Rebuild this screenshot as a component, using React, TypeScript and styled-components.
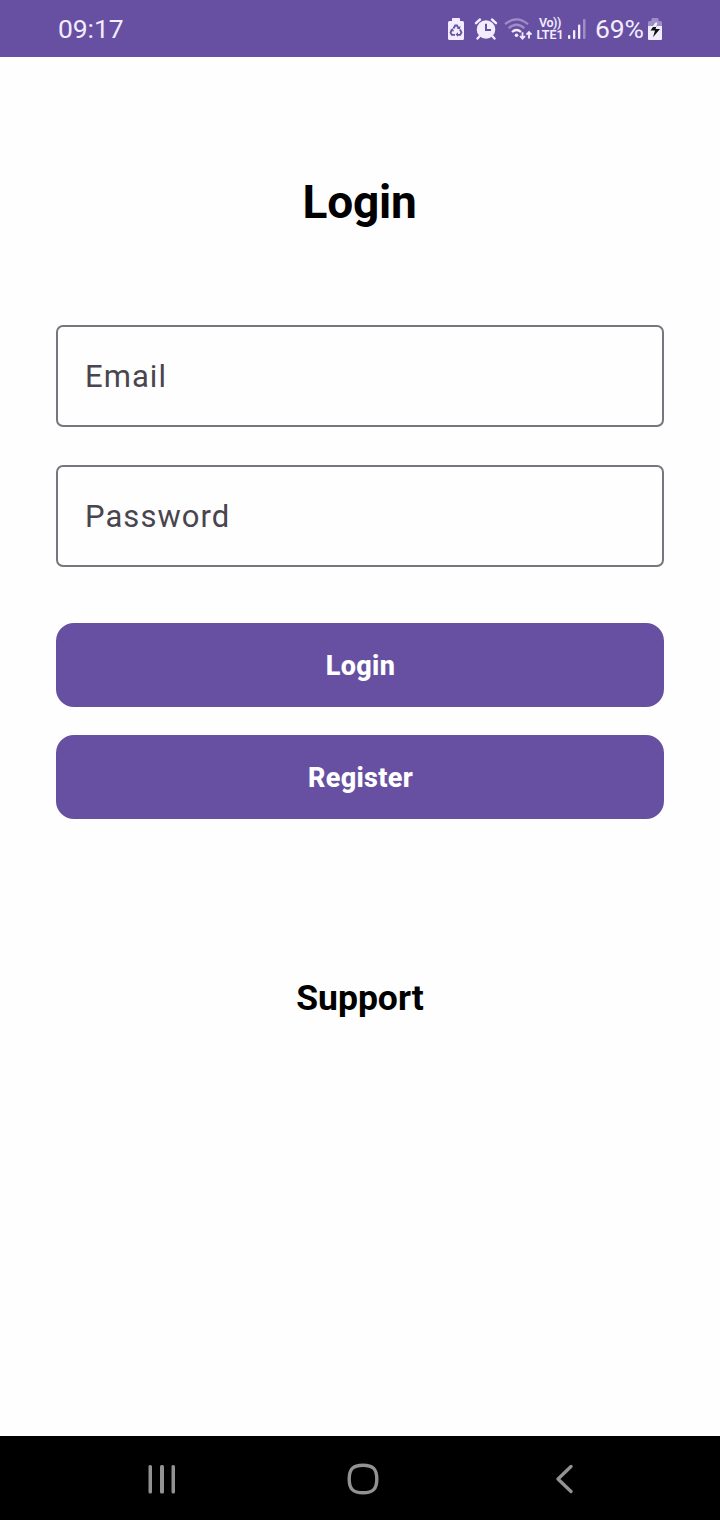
import React from "react";
import styled, { createGlobalStyle } from "styled-components";

const GlobalStyle = createGlobalStyle`
  * { box-sizing: border-box; }
  body { margin: 0; background: #fefefe; font-family: Roboto, "Liberation Sans", sans-serif; }
`;

const Screen = styled.div`
  display: flex;
  flex-direction: column;
  width: 720px;
  height: 1520px;
  background: #fefefe;
`;

const StatusBar = styled.header`
  display: flex;
  align-items: center;
  justify-content: space-between;
  height: 57px;
  padding: 1px 58px 0;
  background: #6750a2;
  color: #f3ecff;
`;

const Clock = styled.time`
  font-size: 26.5px;
  line-height: 32px;
  letter-spacing: -0.1px;
`;

const Indicators = styled.div`
  display: flex;
  align-items: center;
  height: 32px;
  svg { display: block; flex: none; }
`;

const Network = styled.div`
  display: flex;
  flex-direction: column;
  align-items: center;
  width: 28px;
  margin: 0 4px 0 3px;
  font-weight: 600;
  white-space: nowrap;
`;

const NetworkLine = styled.span<{ $size: number; $spacing?: number }>`
  font-size: ${(p) => p.$size}px;
  letter-spacing: ${(p) => p.$spacing ?? 0}px;
  line-height: 12px;
`;

const Percent = styled.span`
  width: 62px;
  padding-left: 9px;
  font-size: 26.5px;
  line-height: 32px;
  letter-spacing: -0.2px;
  white-space: nowrap;
`;

const Main = styled.main`
  flex: 1;
  display: flex;
  flex-direction: column;
  padding: 115px 56px 0;
`;

const Title = styled.h1`
  margin: 0;
  padding-right: 1px;
  height: 60px;
  font-size: 46px;
  line-height: 60px;
  font-weight: 700;
  letter-spacing: -0.2px;
  text-align: center;
  color: #000;
`;

const Form = styled.form`
  display: flex;
  flex-direction: column;
  margin-top: 93px;
`;

const Field = styled.input`
  width: 100%;
  height: 102px;
  margin: 0 0 38px;
  padding: 0 27px;
  border: 2px solid #79747e;
  border-radius: 7px;
  outline: none;
  background: transparent;
  font-family: inherit;
  font-size: 31px;
  letter-spacing: 1.05px;
  color: #49454f;
  &::placeholder { color: #49454f; opacity: 1; }
`;

const Actions = styled.div`
  display: flex;
  flex-direction: column;
  gap: 28px;
  margin-top: 18px;
`;

const Button = styled.button`
  height: 84px;
  padding: 2px 0 0 1px;
  border: 0;
  border-radius: 18px;
  background: #6750a2;
  color: #fff;
  font-family: inherit;
  font-size: 27px;
  font-weight: 800;
  letter-spacing: 0.3px;
`;

const Support = styled.a`
  margin-top: 156px;
  font-size: 35.5px;
  line-height: 46px;
  font-weight: 700;
  text-align: center;
  color: #000;
`;

const NavBar = styled.nav`
  display: flex;
  align-items: center;
  justify-content: space-between;
  height: 84px;
  padding: 2px 136px 0 142px;
  background: #000;
`;

const NavButton = styled.button`
  display: flex;
  align-items: center;
  justify-content: center;
  width: 40px;
  height: 40px;
  padding: 0;
  border: 0;
  background: none;
  color: #929292;
`;

const BatteryRecycle = () => (
  <svg width="16" height="24" viewBox="0 0 16 24" fill="none">
    <path d="M4 4V1.7Q4 1 4.700 1h6.600q.7 0 .7.700V4h2.500Q16 4 16 5.500v16Q16 23 14.500 23h-13Q0 23 0 21.500v-16Q0 4 1.500 4Z" fill="#f3ecff" />
    <path d="M5.500 11.500 7.200 8.500h1.800l1.500 2.500M12 12.500l1.500 3-1.300 2.300H9.500M7 17.800H3.800l-1.300-2.300L4 13" stroke="#6750a2" strokeWidth="1.800" />
    <path d="m8.700 11.500 3.300.7.500-3.200ZM10 15.300v4.500l-2.400-2.200ZM1.800 13.200l3-2 1.200 3.400Z" fill="#6750a2" />
  </svg>
);

const Alarm = () => (
  <svg width="24" height="24" viewBox="0 0 24 24" fill="none" stroke="#f3ecff">
    <circle cx="12" cy="12.500" r="9.300" fill="#f3ecff" stroke="none" />
    <path d="m2 6.200 4-3.700M22 6.200l-4-3.700M5.800 19l-2.300 2.500M18.200 19l2.300 2.500" strokeWidth="2.400" strokeLinecap="round" />
    <path d="M12 6.800v6.200h5" stroke="#6750a2" strokeWidth="2" />
  </svg>
);

const Wifi = () => (
  <svg width="29" height="24" viewBox="0 0 29 24" fill="none" stroke="#f3ecff">
    <path d="M1 7.200Q12.500-2.500 24 7.200" strokeWidth="2.200" opacity=".4" />
    <path d="M4.700 11.200Q12.500 4.300 20.300 11.200" strokeWidth="2.200" opacity=".4" />
    <path d="M8 15Q12.500 11 17 15" strokeWidth="2.300" />
    <circle cx="12.500" cy="18.200" r="1.800" fill="#f3ecff" stroke="none" />
    <path d="M18.500 15.200v6.300M16 19l2.500 2.700L21 19M25 21.500v-6.300M22.500 17.700 25 15l2.500 2.700" strokeWidth="1.800" />
  </svg>
);

const Signal = () => (
  <svg width="18" height="24" viewBox="0 0 18 24" fill="#f3ecff">
    <rect y="18" width="2.300" height="4" rx="1" />
    <rect x="5" y="13" width="2.300" height="9" rx="1" />
    <rect x="10" y="7.500" width="2.300" height="14.500" rx="1" />
    <rect x="15" y="2" width="2.500" height="20" rx="1" opacity=".4" />
  </svg>
);

const BatteryCharging = () => (
  <svg width="14" height="24" viewBox="0 0 14 24">
    <path d="M3.500 4V2Q3.500 1 4.500 1h5q1 0 1 1v2h2Q14 4 14 5.500V10H0V5.500Q0 4 1.500 4Z" fill="#f3ecff" opacity=".4" />
    <path d="M0 9h14v13q0 1-1 1H1q-1 0-1-1Z" fill="#f3ecff" />
    <path d="m7.500 6.500-5 7H7L5 20.200l7-8.200H7.600l1.600-5.500Z" fill="#111" />
    <path d="M7.500 5.500h2L8.400 10H4.200Z" fill="#f3ecff" />
  </svg>
);

const Recents = () => (
  <svg width="28" height="30" viewBox="0 0 28 30" fill="currentColor">
    <rect x="0.500" y="1" width="3.500" height="28.500" rx="1.500" />
    <rect x="12" y="1" width="4" height="28.500" rx="1.500" />
    <rect x="23.500" y="1" width="3.500" height="28.500" rx="1.500" />
  </svg>
);

const Home = () => (
  <svg width="32" height="32" viewBox="0 0 32 32" fill="none" stroke="currentColor" strokeWidth="3.400">
    <path d="M16 2.200C26 2.200 29.800 6 29.800 16S26 29.800 16 29.800 2.200 26 2.200 16 6 2.200 16 2.200Z" />
  </svg>
);

const Back = () => (
  <svg width="18" height="30" viewBox="0 0 18 30" fill="none" stroke="currentColor" strokeWidth="3.300" strokeLinecap="round" strokeLinejoin="round">
    <path d="M16 2.500 3 15l13 12.500" />
  </svg>
);

const AlarmSlot = styled.span`
  margin: 0 6px 0 10px;
`;

export default function App() {
  return (
    <Screen>
      <GlobalStyle />
      <StatusBar>
        <Clock>09:17</Clock>
        <Indicators>
          <BatteryRecycle />
          <AlarmSlot><Alarm /></AlarmSlot>
          <Wifi />
          <Network>
            <NetworkLine $size={12.5} $spacing={-0.4}>Vo))</NetworkLine>
            <NetworkLine $size={12.5}>LTE1</NetworkLine>
          </Network>
          <Signal />
          <Percent>69%</Percent>
          <span><BatteryCharging /></span>
        </Indicators>
      </StatusBar>
      <Main>
        <Title>Login</Title>
        <Form>
          <Field type="email" placeholder="Email" aria-label="Email" />
          <Field type="password" placeholder="Password" aria-label="Password" />
          <Actions>
            <Button type="button">Login</Button>
            <Button type="button">Register</Button>
          </Actions>
        </Form>
        <Support>Support</Support>
      </Main>
      <NavBar>
        <NavButton aria-label="Recents"><Recents /></NavButton>
        <NavButton aria-label="Home"><Home /></NavButton>
        <NavButton aria-label="Back"><Back /></NavButton>
      </NavBar>
    </Screen>
  );
}
